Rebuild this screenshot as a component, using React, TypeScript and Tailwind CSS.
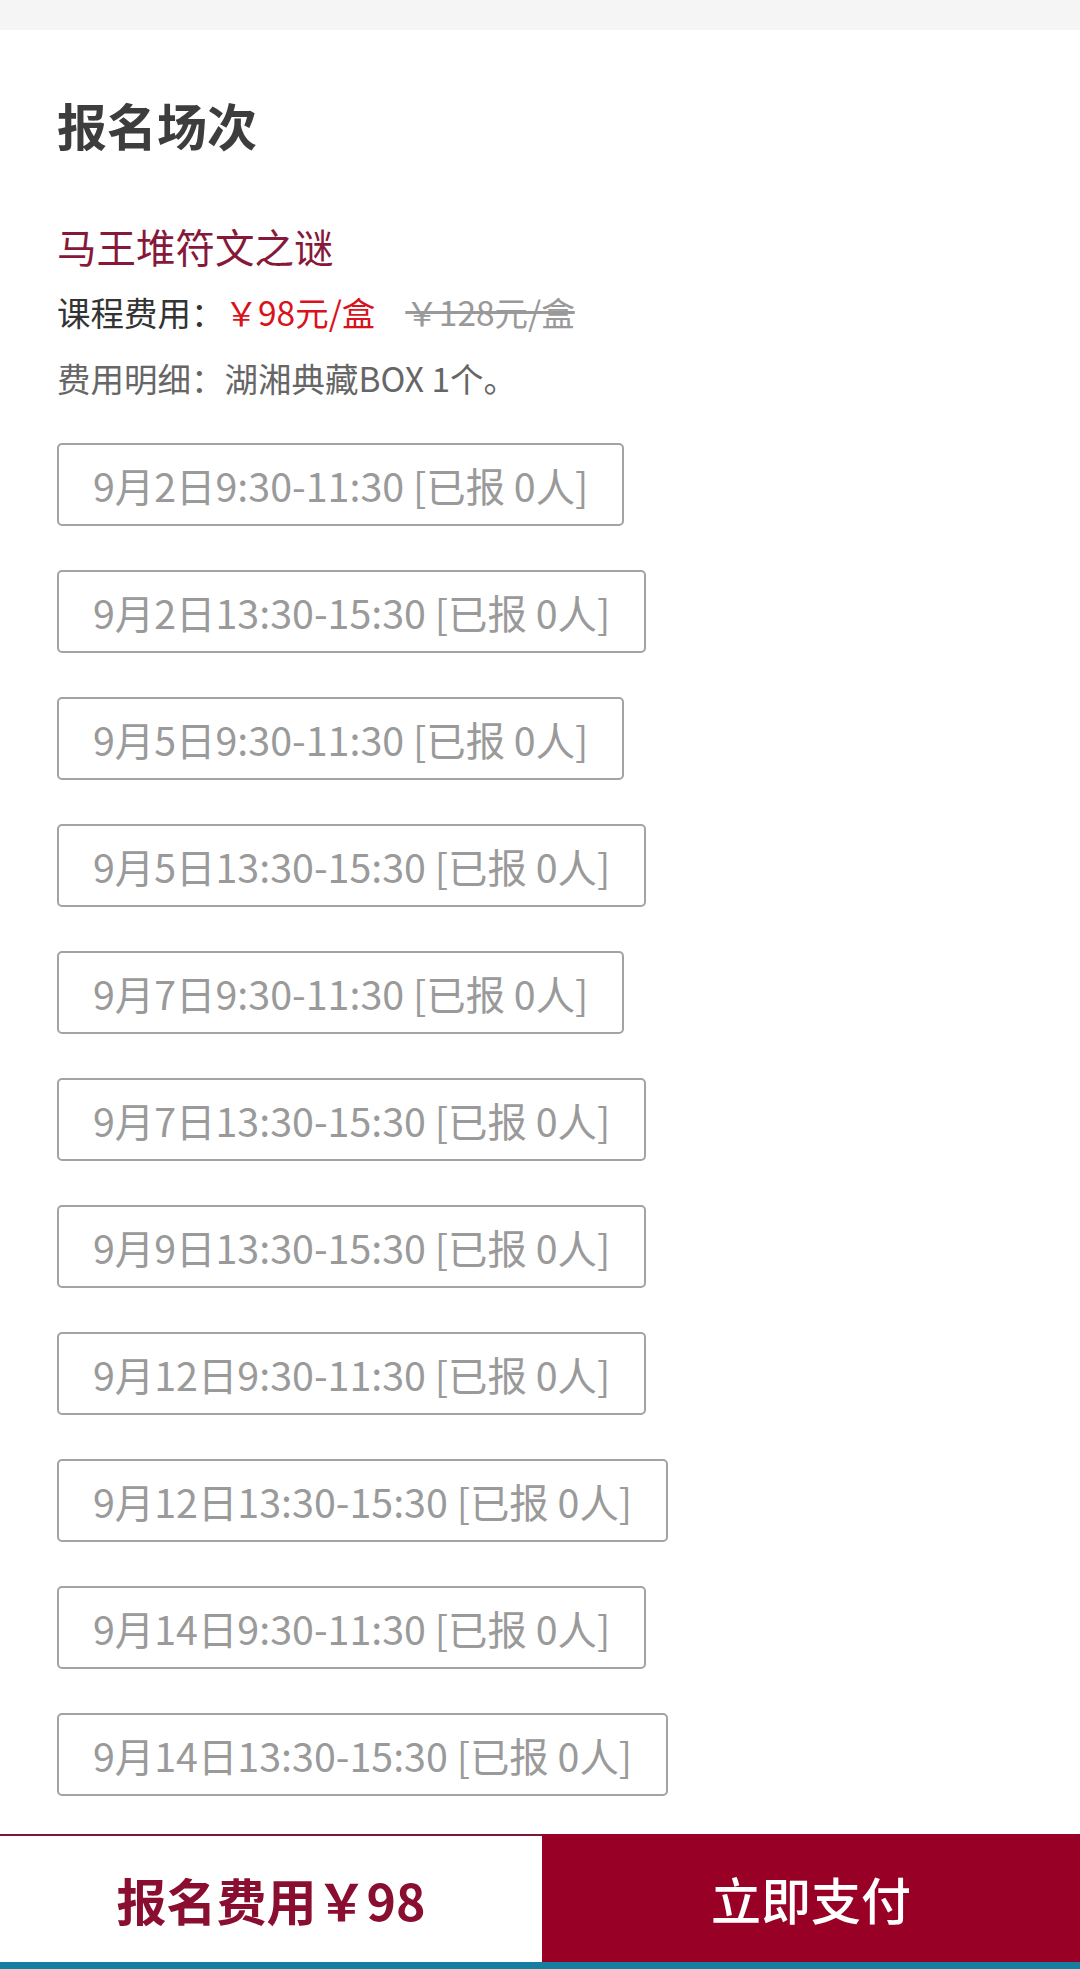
const sessions = [
  '9月2日9:30-11:30 [已报 0人]',
  '9月2日13:30-15:30 [已报 0人]',
  '9月5日9:30-11:30 [已报 0人]',
  '9月5日13:30-15:30 [已报 0人]',
  '9月7日9:30-11:30 [已报 0人]',
  '9月7日13:30-15:30 [已报 0人]',
  '9月9日13:30-15:30 [已报 0人]',
  '9月12日9:30-11:30 [已报 0人]',
  '9月12日13:30-15:30 [已报 0人]',
  '9月14日9:30-11:30 [已报 0人]',
  '9月14日13:30-15:30 [已报 0人]',
];

export default function App() {
  return (
    <div className="flex min-h-[1969px] w-[1080px] flex-col bg-white font-['Noto_Sans_CJK_SC','Noto_Sans',sans-serif]">
      <div className="h-[30px] bg-[#f5f5f5]" />

      <section className="px-[57px]">
        <h1 className="mt-[69px] text-[50px] font-bold leading-[50px] text-[#3d3d3d]">报名场次</h1>

        <div className="mt-[64px]">
          <div className="text-[39.5px] leading-[66px] text-[#861839]">马王堆符文之谜</div>
          <div className="flex items-center text-[33.5px] leading-[66px] text-[#333]">
            <span>课程费用：</span>
            <span className="text-[#d9121c]">￥98元/盒</span>
            <span className="ml-[30px] text-[#999] line-through">￥128元/盒</span>
          </div>
          <div className="text-[33.5px] leading-[66px] text-[#666]">费用明细：湖湘典藏BOX 1个。</div>
        </div>

        <div className="mt-[32px] flex flex-col items-start gap-[44px]">
          {sessions.map((s) => (
            <button
              key={s}
              className="h-[83px] rounded-[5px] border-2 border-[#a3a3a3] px-[34px] text-[39.4px] leading-[79px] text-[#9a9a9a]"
            >
              {s}
            </button>
          ))}
        </div>
      </section>

      <div className="mt-[38px] flex h-[128px]">
        <div className="flex w-[542px] items-center justify-center border-t-2 border-[#7c1833] bg-white text-[50px] font-bold text-[#8a0e30]">
          报名费用￥98
        </div>
        <div className="flex flex-1 items-center justify-center bg-[#990026] text-[50px] font-medium text-white">
          立即支付
        </div>
      </div>
      <div className="h-[7px] bg-[#147fa0]" />
    </div>
  );
}
